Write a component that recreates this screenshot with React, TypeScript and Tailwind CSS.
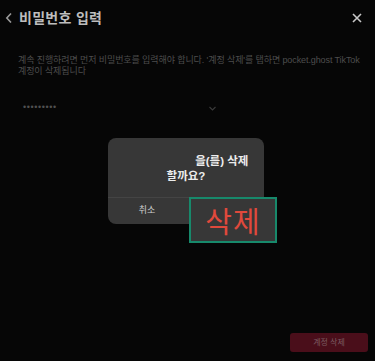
import React from 'react';

const font = { fontFamily: '"Liberation Sans", "Noto Sans CJK KR", sans-serif' };

export default function App() {
  return (
    <div className="relative w-[375px] h-[361px] overflow-hidden bg-[#060606] flex flex-col" style={font}>
      {/* Header */}
      <div className="flex items-center h-[36px] pl-[5px] pr-[13px]">
        <svg width="8" height="12" viewBox="0 0 8 12" className="mr-[6px]">
          <path d="M6 1.5 L1.8 6 L6 10.5" stroke="#9a9a9a" strokeWidth="1.6" fill="none" />
        </svg>
        <span className="text-[14px] font-bold text-[#bdbdbd] tracking-[0.3px]">비밀번호 입력</span>
        <svg width="10" height="10" viewBox="0 0 10 10" className="ml-auto">
          <path d="M1 1 L9 9 M9 1 L1 9" stroke="#c8c8c8" strokeWidth="1.6" />
        </svg>
      </div>

      {/* Description */}
      <p className="mt-[19px] px-[18px] text-[9px] leading-[11px] text-[#4d4d4d] whitespace-nowrap tracking-[-0.1px]">
        계속 진행하려면 먼저 비밀번호를 입력해야 합니다. '계정 삭제'를 탭하면 pocket.ghost TikTok
        <br />
        계정이 삭제됩니다
      </p>

      {/* Password row */}
      <div className="mt-[25px] flex items-center h-[12px] pl-[23px] w-[216px]">
        <span className="text-[9px] tracking-[0.6px] text-[#505050]">•••••••••</span>
        <svg width="7" height="5" viewBox="0 0 7 5" className="ml-auto">
          <path d="M0.5 1 L3.5 4 L6.5 1" stroke="#3a3a3a" strokeWidth="1.2" fill="none" />
        </svg>
      </div>

      {/* Bottom button */}
      <div className="mt-auto mb-[9px] flex justify-end pr-[7px]">
        <div className="w-[78px] h-[19px] rounded-[3px] bg-[#4a0e1a] flex items-center justify-center text-[8px] text-[#7a5a60]">
          계정 삭제
        </div>
      </div>

      {/* Dialog */}
      <div className="absolute left-[108px] top-[138px] w-[156px] h-[86px] rounded-[8px] bg-[#373737] flex flex-col overflow-hidden">
        <div className="h-[59px] flex flex-col items-center justify-center pt-[2px] text-[11.5px] font-bold text-[#ececec] leading-[15px]">
          <span>
            <span className="opacity-0">pocket.ghost</span>을(를) 삭제
          </span>
          <span>할까요?</span>
        </div>
        <div className="flex-1 flex border-t border-[#444444]">
          <div className="flex-1 flex items-center justify-center text-[9px] text-[#cfcfcf]">취소</div>
          <div className="flex-1" />
        </div>
      </div>

      {/* Highlight */}
      <div className="absolute left-[189px] top-[197px] w-[88px] h-[46px] border-2 border-[#17896b] bg-[#373737] flex items-center justify-center">
        <span className="text-[29px] leading-none text-[#e0493c] tracking-[1px]" style={{ fontFamily: '"Noto Sans CJK KR", sans-serif' }}>
          삭제
        </span>
      </div>
    </div>
  );
}
